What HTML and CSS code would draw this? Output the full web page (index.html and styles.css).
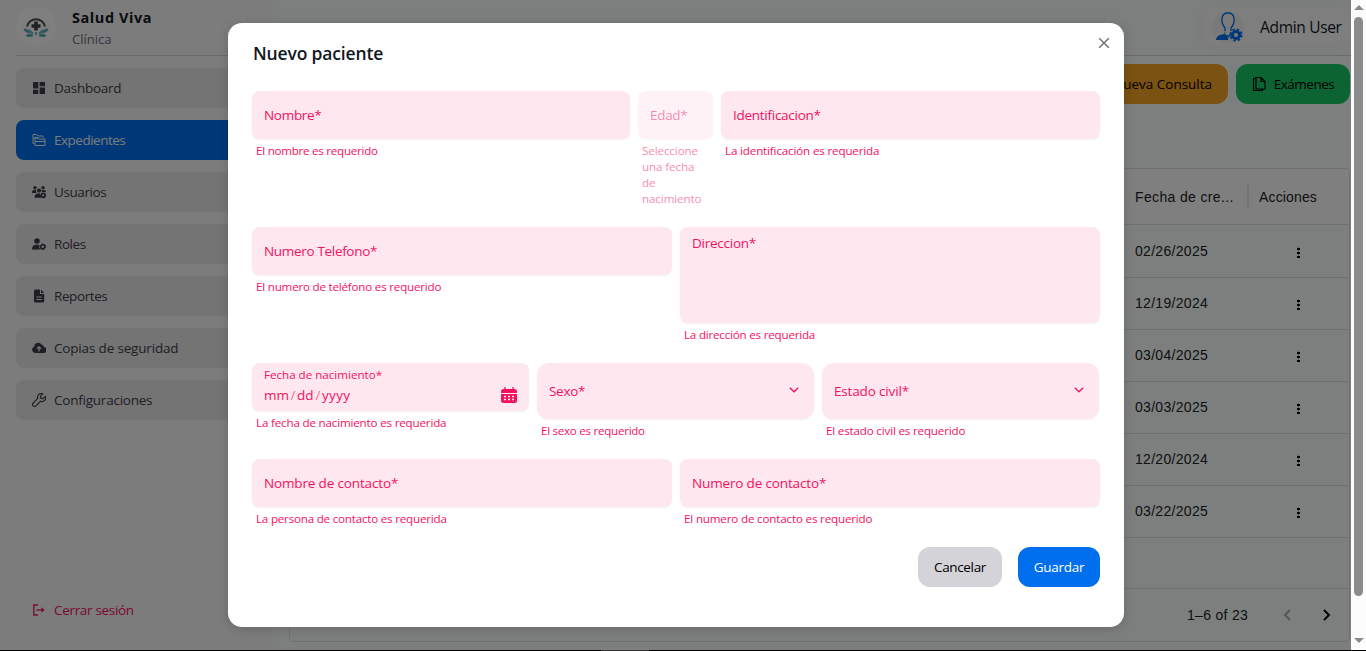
FILE: index.html
```html
<!DOCTYPE html>
<html lang="es">
<head>
<meta charset="utf-8">
<title>Salud Viva</title>
<link rel="stylesheet" href="styles.css">
</head>
<body>
<div class="screen">
  <div class="app">
    <aside class="sidebar">
      <div class="brand">
        <div class="brand-logo">
          <svg viewBox="0 0 40 40" width="40" height="40">
            <path d="M11 19.500a9.200 9.200 0 0 1 18 0" fill="none" stroke="#4a4c50" stroke-width="2"/>
            <path d="M20 14.500v9M15.500 19h9" stroke="#3f4246" stroke-width="3.600"/>
            <path d="M7.500 21.500c4 0 6 2 6.500 4.500-3 0-6-1-6.500-4.500zM32.500 21.500c-4 0-6 2-6.500 4.500 3 0 6-1 6.500-4.500zM9.500 28.500c3-3 6.500-2.500 8 0-2 2-5.500 2-8 0zM30.500 28.500c-3-3-6.500-2.500-8 0 2 2 5.500 2 8 0z" fill="#5fb0b8"/>
            <path d="M12.500 23l4.500 3.500M27.500 23L23 26.500M20 25v3" fill="none" stroke="#5fb0b8" stroke-width="1.800"/>
          </svg>
        </div>
        <div class="brand-text"><strong>Salud Viva</strong><span>Clínica</span></div>
      </div>
      <nav class="nav">
        <a class="nav-item"><svg viewBox="0 0 14 14"><path d="M1 1h5.300v6.600H1zM1 8.700h5.300V13H1zM7.600 1H13v4.200H7.600zM7.600 6.400H13V13H7.600z" fill="currentColor"/></svg><span class="s-dash">Dashboard</span></a>
        <a class="nav-item active"><svg viewBox="0 0 14 14"><path d="M2 10.500H1V1.500h3.500L6 3h5v1.500M2 5h3l1.200 1.500M3 12.500V4.500h3L7.300 6H13v6.500zM3 8.500h10" fill="none" stroke="currentColor"/></svg><span class="s-exp">Expedientes</span></a>
        <a class="nav-item"><svg viewBox="0 0 14 14"><g fill="currentColor"><circle cx="3" cy="2.800" r="1.700"/><circle cx="11" cy="2.800" r="1.700"/><circle cx="7" cy="5.600" r="2.100"/><path d="M0 8V7a2 2 0 0 1 2-2h2.200a3.500 3.500 0 0 0 .500 3zM9.600 5H12a2 2 0 0 1 2 2H9.800zM2.500 12.800c0-3 1.500-4.300 3.500-4.300h2c.400 1.300.500 3 1.500 4.300z"/></g><circle cx="11.200" cy="10.300" r="2" fill="none" stroke="currentColor" stroke-width="1.800"/></svg><span class="s-usr">Usuarios</span></a>
        <a class="nav-item"><svg viewBox="0 0 14 14"><g fill="currentColor"><circle cx="5" cy="4" r="2.800"/><path d="M0 12.500C0 9 2 7.800 4 7.800h3.200c-.300 1.800 0 3.500 1.300 4.700z"/></g><circle cx="10.800" cy="9.700" r="2" fill="none" stroke="currentColor" stroke-width="1.600"/><circle cx="10.800" cy="9.700" r="2.900" fill="none" stroke="currentColor" stroke-width="1" stroke-dasharray="1.500 1.540"/></svg><span class="s-rol">Roles</span></a>
        <a class="nav-item"><svg viewBox="0 0 14 14"><path d="M3.500.500H8V5h4.200v7a1.500 1.500 0 0 1-1.500 1.500H3.500A1.500 1.500 0 0 1 2 12V2A1.500 1.500 0 0 1 3.500.500zM9 .500L12.200 4H9z" fill="currentColor"/><path d="M4.300 8h5.500M4.300 10.500h5.500" stroke="#e7e7e9"/></svg><span class="s-rep">Reportes</span></a>
        <a class="nav-item"><svg viewBox="0 0 14 14"><path d="M3.200 12a3.200 3.200 0 0 1-1-6.200A4 4 0 0 1 9.500 3.600a2.800 2.800 0 0 1 2.400 2.400A3 3 0 0 1 11 12z" fill="currentColor"/><path d="M7 10.500V6M5 7.800l2-2 2 2" fill="none" stroke="#e7e7e9" stroke-width="1.300"/></svg><span class="s-cop">Copias de seguridad</span></a>
        <a class="nav-item"><svg viewBox="0 0 14 14"><path d="M10.800.900a3.600 3.600 0 0 0-5 4.500L.900 10.300a1.400 1.400 0 0 0 0 2.100l.700.700a1.400 1.400 0 0 0 2.100 0l4.900-4.900a3.600 3.600 0 0 0 4.700-4.800L11 5.600 8.700 5.200l-.300-2.100z" fill="none" stroke="currentColor" stroke-width="1.200" stroke-linejoin="round"/></svg><span class="s-conf">Configuraciones</span></a>
      </nav>
      <a class="logout"><svg viewBox="0 0 14 14"><path d="M6 2H1.800v10H6" fill="none" stroke="currentColor" stroke-width="1.300"/><path d="M4.500 7H11" stroke="currentColor" stroke-width="1.300"/><path d="M9.500 4.300L12.600 7 9.500 9.700z" fill="currentColor"/></svg><span class="s-out">Cerrar sesión</span></a>
    </aside>
    <main class="main">
      <header class="topbar">
        <div class="user">
          <div class="user-pic"><svg viewBox="0 0 32 32" width="32" height="32"><path d="M13 20v-3c-2.500-3-3.500-6-3-10 .500-3 2.500-5 6-5s5.500 2 6 5c.500 4-.500 7-3 10v3" fill="none" stroke="#006fee" stroke-width="1.300"/><path d="M4 29c.300-3.500 3-5 8-6l4 3.500V29zM12.500 19.500l1 4 2.500 1 3-2 .500-3v4l-3 3-4-3z" fill="#006fee"/><circle cx="24" cy="24" r="3.600" fill="none" stroke="#006fee" stroke-width="3"/><circle cx="24" cy="24" r="5.700" fill="none" stroke="#006fee" stroke-width="1.800" stroke-dasharray="2.400 2.077"/></svg></div>
          <span class="s-admin">Admin User</span>
        </div>
      </header>
      <div class="actions">
        <button class="btn warn"><span class="s-cons">Nueva Consulta</span></button>
        <button class="btn success"><svg viewBox="0 0 14 16" width="14" height="16"><path d="M4 1.500h5l4 4V13H4zM9 1.500v4h4M3.500 2.500H1.500v12h9V13.500" fill="none" stroke="currentColor" stroke-width="1.200"/></svg><span class="s-exam">Exámenes</span></button>
      </div>
      <section class="grid">
        <div class="row head"><span class="date">Fecha de cre...</span><span class="acc">Acciones</span></div>
        <div class="row first"><span class="date">02/26/2025</span><i class="dots"></i></div>
        <div class="row"><span class="date">12/19/2024</span><i class="dots"></i></div>
        <div class="row"><span class="date">03/04/2025</span><i class="dots"></i></div>
        <div class="row"><span class="date">03/03/2025</span><i class="dots"></i></div>
        <div class="row"><span class="date">12/20/2024</span><i class="dots"></i></div>
        <div class="row"><span class="date">03/22/2025</span><i class="dots"></i></div>
        <div class="filler"></div>
        <div class="pager"><span>1–6 of 23</span>
          <svg class="prev" viewBox="0 0 10 12"><path d="M8 1L3 6l5 5" fill="none" stroke="currentColor" stroke-width="2"/></svg>
          <svg viewBox="0 0 10 12"><path d="M2 1l5 5-5 5" fill="none" stroke="currentColor" stroke-width="2"/></svg>
        </div>
      </section>
    </main>
  </div>
  <div class="scrollbar"><i class="up"></i><i class="thumb"></i><i class="down"></i></div>
</div>
<div class="edge"><i></i></div>
<div class="overlay">
  <form class="modal">
    <div class="modal-head"><h2>Nuevo paciente</h2>
      <svg viewBox="0 0 12 12" width="12" height="12"><path d="M1.200 1.200l9.600 9.600M10.800 1.200L1.200 10.800" stroke="#71717a" stroke-width="1.500"/></svg></div>
    <div class="fields r1">
      <div><div class="box"><span class="s-nom">Nombre*</span></div><p><span class="h-nom">El nombre es requerido</span></p></div>
      <div class="disabled"><div class="box"><span class="s-edad">Edad*</span></div><p class="h-edad">Seleccione<br>una fecha<br>de<br>nacimiento</p></div>
      <div><div class="box"><span class="s-iden">Identificacion*</span></div><p><span class="h-iden">La identificación es requerida</span></p></div>
    </div>
    <div class="fields r2">
      <div><div class="box"><span class="s-tel">Numero Telefono*</span></div><p><span class="h-tel">El numero de teléfono es requerido</span></p></div>
      <div><div class="box area"><span class="s-dir">Direccion*</span></div><p><span class="h-dir">La dirección es requerida</span></p></div>
    </div>
    <div class="fields r3">
      <div><div class="box datebox"><div><small>Fecha de nacimiento*</small><div class="ymd"><span class="mm">mm</span><i>/</i><span class="dd">dd</span><i>/</i><span class="yy">yyyy</span></div></div>
        <svg viewBox="0 0 16 16" width="16" height="16"><path d="M0 6V4.500A2.500 2.500 0 0 1 2.500 2h11A2.500 2.500 0 0 1 16 4.500V6zM0 7h16v6.500a2.500 2.500 0 0 1-2.500 2.500h-11A2.500 2.500 0 0 1 0 13.500z" fill="#f31260"/><path d="M4 0v3M12 0v3" stroke="#f31260" stroke-width="1.300"/><path d="M3 9.500h10M3 12.500h10" stroke="#fee7ef" stroke-width="1.500" stroke-dasharray="2 2"/></svg></div><p><span class="h-fec">La fecha de nacimiento es requerida</span></p></div>
      <div><div class="box select"><span class="s-sexo">Sexo*</span><svg viewBox="0 0 10 6" width="10" height="6"><path d="M.800.800L5 4.800 9.200.800" fill="none" stroke="#f31260" stroke-width="1.400"/></svg></div><p><span class="h-sexo">El sexo es requerido</span></p></div>
      <div><div class="box select"><span class="s-civ">Estado civil*</span><svg viewBox="0 0 10 6" width="10" height="6"><path d="M.800.800L5 4.800 9.200.800" fill="none" stroke="#f31260" stroke-width="1.400"/></svg></div><p><span class="h-civ">El estado civil es requerido</span></p></div>
    </div>
    <div class="fields r2">
      <div><div class="box"><span class="s-nc">Nombre de contacto*</span></div><p><span class="h-nc">La persona de contacto es requerida</span></p></div>
      <div><div class="box"><span class="s-nc">Numero de contacto*</span></div><p><span class="h-nuc">El numero de contacto es requerido</span></p></div>
    </div>
    <div class="modal-foot"><button type="button" class="btn cancel"><span class="s-can">Cancelar</span></button><button type="button" class="btn save"><span class="s-gua">Guardar</span></button></div>
  </form>
</div>
</body>
</html>
```
FILE: styles.css
```css
* { box-sizing: border-box; }
body { margin: 0; height: 651px; overflow: hidden; font: 13.5px/20px "Open Sans", "Noto Sans", sans-serif; color: #11181c; background: #000; }
h2, p { margin: 0; }
svg { flex: none; }
span, small { white-space: nowrap; }
.screen { display: flex; height: 650px; }
.app { display: flex; width: 1351px; height: 650px; background: #fbfffd; }
.sidebar { display: flex; flex-direction: column; width: 273px; padding: 0 16px; background: #f8f8fb; }
.brand { display: flex; align-items: flex-start; gap: 16px; height: 56px; padding-top: 7px; border-bottom: 1px solid #d4d4d8; }
.brand-logo { width: 40px; height: 40px; border-radius: 50%; background: #fffffe; }
.brand-text { display: flex; flex-direction: column; }
.brand-text strong { line-height: 22px; font-size: 14.5px; letter-spacing: .55px; }
.brand-text span { line-height: 20px; font-size: 13px; color: #71717a; }
.nav { display: flex; flex-direction: column; gap: 12px; padding-top: 12px; }
.nav-item { display: flex; align-items: center; gap: 8px; height: 40px; padding-left: 16px; border-radius: 8px; background: #e8e8eb; color: #3f3f46; }
.nav-item svg, .logout svg { width: 14px; height: 14px; }
.nav-item.active { background: #006fee; color: #f4f6fa; }
.logout { display: flex; align-items: center; gap: 8px; height: 40px; margin: auto 0 20px; padding-left: 16px; color: #f31260; }
.main { display: flex; flex-direction: column; flex: 1; min-width: 0; }
.topbar { display: flex; justify-content: flex-end; height: 56px; margin-left: 16px; padding: 7px 1px 0 0; border-bottom: 1px solid #d4d4d8; }
.user { display: flex; align-items: center; gap: 16px; width: 146px; height: 40px; padding-left: 8px; border-radius: 10px; background: #fdfdff; box-shadow: 0 0 14px #ededf8; font-size: 15.5px; }
.user-pic { width: 32px; height: 32px; border-radius: 50%; background: #f4f4f6; }
.actions { display: flex; justify-content: flex-end; gap: 8px; padding: 8px 1px 0 0; }
.btn { display: flex; align-items: center; justify-content: center; height: 40px; border: 0; border-radius: 12px; padding: 0 16px; font: inherit; color: #000; }
.warn { background: #f5a524; width: 164px; justify-content: flex-end; }
.success { background: #17c964; width: 114px; gap: 8px; }
.grid { display: flex; flex-direction: column; width: 1061px; height: 474px; margin: 64px 0 0 16px; border: 1px solid #dfe1e0; border-radius: 4px; font: 14px/20px "Liberation Sans", Arial, sans-serif; letter-spacing: .3px; color: #202224; }
.row { display: flex; align-items: center; height: 52px; padding: 0 0 1px 845px; border-bottom: 1px solid #dfe1e0; }
.row.first { height: 53px; }
.row.head { height: 56px; padding-bottom: 0; background: #fff; border-radius: 4px 4px 0 0; }
.date { width: 114px; }
.head .date { height: 24px; line-height: 24px; border-right: 2px solid #e4e4e4; letter-spacing: .35px; }
.head .acc { padding-left: 10px; letter-spacing: .15px; }
.dots { width: 3px; height: 11px; margin: 3px 0 0 48px; background: radial-gradient(circle, #000 1.1px, transparent 1.7px) 0 0 / 3px 4px repeat-y; }
.filler { flex: 1; }
.pager { display: flex; align-items: center; height: 53px; padding-left: 897px; border-top: 1px solid #dfe1e0; }
.pager span { flex: none; width: 95px; }
.pager svg { width: 10px; height: 12px; color: #000; }
.pager .prev { margin-right: 30px; color: #aaa; }
.scrollbar { display: flex; flex-direction: column; align-items: center; width: 15px; height: 650px; padding-top: 5px; background: #fcfcfc; }
.scrollbar .up { border: 5px solid transparent; border-top: 0; border-bottom: 5px solid #8b8b8b; }
.scrollbar .thumb { width: 9px; height: 579px; margin: 7px 0 42px; border-radius: 5px; background: #8b8b8b; }
.scrollbar .down { border: 5px solid transparent; border-bottom: 0; border-top: 5px solid #8b8b8b; }
.edge { height: 1px; padding-left: 601px; }
.edge i { display: block; width: 48px; height: 1px; background: #686868; }
.overlay { position: absolute; inset: 0 15px 0 0; display: flex; align-items: center; justify-content: center; padding: 0 0 1px 1px; background: rgba(0, 0, 0, .5); }
.modal { width: 896px; height: 604px; padding: 16px 24px 0; border-radius: 14px; background: #fff; box-shadow: 0 2px 12px rgba(0, 0, 0, .16); }
.modal-head { display: flex; justify-content: space-between; height: 52px; }
.modal-head h2 { font-size: 17.5px; line-height: 28px; font-weight: 600; padding-left: 1px; white-space: nowrap; letter-spacing: -.15px; }
.modal-head svg { margin: -2px -10px 0 0; }
.fields { display: grid; gap: 8px; margin-bottom: 16px; align-items: start; color: #f31260; }
.r1 { grid-template-columns: 378px 75px 379px; }
.r2 { grid-template-columns: 420px 420px; }
.r3 { grid-template-columns: 277px 277px 277px; }
.disabled { opacity: .5; }
.box { display: flex; align-items: center; height: 48px; padding: 0 12px; border-radius: 8px; background: #fee7ef; box-shadow: 0 1px 2px rgba(0, 0, 0, .06); }
.area { height: 96px; align-items: flex-start; padding-top: 6px; }
.select { height: 56px; border-radius: 12px; justify-content: space-between; padding-right: 15px; }
.select svg { margin-top: -3px; }
.datebox { justify-content: space-between; }
.datebox small { display: block; font-size: 11.6px; line-height: 20px; margin-top: -5px; }
.datebox > svg { margin-top: 15px; }
.ymd { display: flex; height: 20px; }
.ymd i { font-style: normal; opacity: .6; width: 8px; text-align: center; }
.mm { width: 25px; }
.dd { width: 17px; }
.yy { letter-spacing: .3px; }
.fields p { padding: 4px; font-size: 11.6px; line-height: 16px; }
.modal-foot { display: flex; justify-content: flex-end; gap: 16px; }
.cancel { width: 84px; background: #d4d4d8; }
.save { width: 82px; background: #006fee; color: #fff; }

/* label tracking */
.s-dash, .s-iden { letter-spacing: -.27px; }
.s-exp { letter-spacing: -.5px; }
.s-usr, .s-rep { letter-spacing: -.41px; }
.s-rol { letter-spacing: -.44px; }
.s-cop { letter-spacing: -.17px; }
.s-conf { letter-spacing: -.23px; }
.s-out { letter-spacing: -.32px; }
.s-nom, .s-edad, .s-sexo, .s-gua { letter-spacing: -.3px; }
.s-cons { letter-spacing: -.02px; }
.s-tel, .s-admin { letter-spacing: -.32px; }
.s-dir { letter-spacing: -.25px; }
.s-civ { letter-spacing: -.16px; }
.s-nc { letter-spacing: -.15px; }
.s-can { letter-spacing: -.35px; }
.s-exam { letter-spacing: -.5px; }

/* helper text tracking */
.h-nom { letter-spacing: -.25px; }
.h-edad { letter-spacing: -.1px; }
.h-iden { letter-spacing: -.15px; }
.h-tel, .h-dir { letter-spacing: -.2px; }
.h-fec, .h-civ { letter-spacing: -.17px; }
.h-sexo { letter-spacing: -.27px; }
.h-nc { letter-spacing: -.2px; }
.h-nuc { letter-spacing: -.16px; }
```
